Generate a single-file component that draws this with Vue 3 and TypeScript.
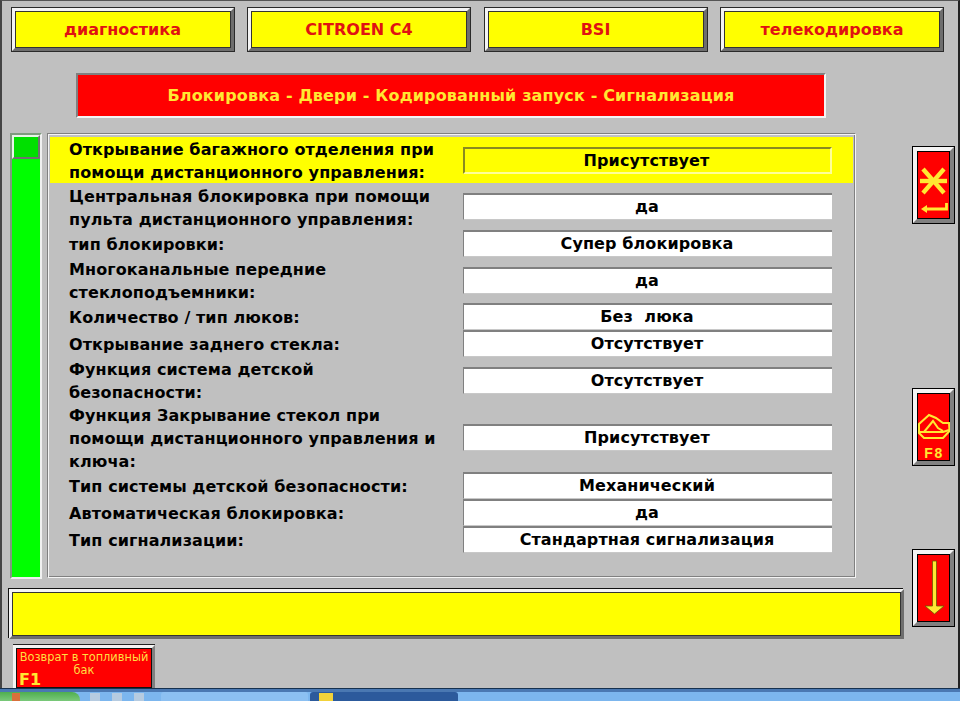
<script setup lang="ts">
import { ref } from 'vue'

const onglets = ['диагностика', 'CITROEN C4', 'BSI', 'телекодировка']

interface Ligne {
  libelle: string[]
  valeur: string
  hauteur: number
}

const lignes: Ligne[] = [
  { libelle: ['Открывание багажного отделения при', 'помощи дистанционного управления:'], valeur: 'Присутствует', hauteur: 46 },
  { libelle: ['Центральная блокировка при помощи', 'пульта дистанционного управления:'], valeur: 'да', hauteur: 47 },
  { libelle: ['тип блокировки:'], valeur: 'Супер блокировка', hauteur: 27 },
  { libelle: ['Многоканальные передние', 'стеклоподъемники:'], valeur: 'да', hauteur: 46 },
  { libelle: ['Количество / тип люков:'], valeur: 'Без  люка', hauteur: 27 },
  { libelle: ['Открывание заднего стекла:'], valeur: 'Отсутствует', hauteur: 27 },
  { libelle: ['Функция система детской', 'безопасности:'], valeur: 'Отсутствует', hauteur: 46 },
  { libelle: ['Функция Закрывание стекол при', 'помощи дистанционного управления и', 'ключа:'], valeur: 'Присутствует', hauteur: 69 },
  { libelle: ['Тип системы детской безопасности:'], valeur: 'Механический', hauteur: 27 },
  { libelle: ['Автоматическая блокировка:'], valeur: 'да', hauteur: 27 },
  { libelle: ['Тип сигнализации:'], valeur: 'Стандартная сигнализация', hauteur: 27 },
]

const active = ref(0)
</script>

<template>
  <div class="ecran">
    <div class="fenetre">
      <nav class="onglets">
        <div v-for="o in onglets" :key="o" class="onglet">{{ o }}</div>
      </nav>

      <h1 class="titre">Блокировка - Двери - Кодированный запуск - Сигнализация</h1>

      <div class="centre">
        <div class="ascenseur"><div class="curseur"></div></div>

        <div class="panneau">
          <div
            v-for="(l, i) in lignes"
            :key="i"
            class="ligne"
            :class="{ active: i === active }"
            :style="{ height: l.hauteur + 'px' }"
            @click="active = i"
          >
            <div class="libelle">
              <div v-for="t in l.libelle" :key="t">{{ t }}</div>
            </div>
            <div class="valeur">{{ l.valeur }}</div>
          </div>
        </div>

        <div class="cote">
          <button class="bouton b1">
            <svg width="32" height="66" viewBox="0 0 32 66">
              <g fill="none" stroke="#ffe832" stroke-width="4.4">
                <path d="M5 17 L26 41" />
                <path d="M26 17 L5 41" />
                <path d="M2 29 H29" />
              </g>
              <path d="M28.5 51 V57 H7" fill="none" stroke="#ffe832" stroke-width="2.8" />
              <path d="M3 57 L9 53 V61 Z" fill="#ffe832" />
            </svg>
          </button>
          <button class="bouton b2">
            <svg width="32" height="66" viewBox="0 0 32 66">
              <g fill="none" stroke="#ffe832" stroke-width="2">
                <path d="M1 30 L11 21 L18 24 L25 29 L31 29 L31.5 37 L25 44 L6 44 L1 39 Z" />
                <path d="M1 38 H25 L31 36" />
                <path d="M6 38 L15 27 L20 34 L25 37" />
              </g>
              <text x="16" y="64" class="f8">F8</text>
            </svg>
          </button>
          <button class="bouton b3">
            <svg width="32" height="66" viewBox="0 0 32 66">
              <path d="M14.5 6 H18.5 V51 H26 L16.5 59 L7 51 H14.5 Z" fill="#ffe832" stroke="#6a5a00" stroke-width="0.8" />
            </svg>
          </button>
        </div>
      </div>

      <div class="message"></div>

      <button class="retour">
        <span class="retour-texte">Возврат в топливный<br />бак</span>
        <span class="retour-touche">F1</span>
      </button>
    </div>

    <footer class="barre">
      <div class="demarrer"><span class="drapeau"></span></div>
      <div class="rapide">
        <i></i><i></i><i></i>
      </div>
      <div class="tache"></div>
      <div class="tache courante"><span class="icone"></span></div>
    </footer>
  </div>
</template>

<style scoped>
* {
  box-sizing: border-box;
}
.ecran {
  width: 960px;
  height: 701px;
  overflow: hidden;
  display: flex;
  flex-direction: column;
  background: #c0c0c0;
  font-family: "DejaVu Sans", "Liberation Sans", sans-serif;
}
.fenetre {
  height: 688px;
  flex: none;
  overflow: hidden;
  border-top: 1px solid #555;
  border-left: 2px solid #444;
  border-right: 2px solid #222;
  background: #c0c0c0;
  padding: 7px 0 0 8px;
}
.onglets {
  display: grid;
  grid-template-columns: repeat(4, 222px);
  column-gap: 14.5px;
  margin-left: 1.5px;
}
.onglet {
  height: 43px;
  background: #ffff00;
  color: #e01212;
  font-weight: bold;
  font-size: 16px;
  display: flex;
  align-items: center;
  justify-content: center;
  border: 3px solid;
  border-color: #f4f4f4 #6e6e6e #6e6e6e #f4f4f4;
  box-shadow: 0 0 0 1px #2a2a2a, inset 0 0 0 1px #333;
}
.titre {
  margin: 22px 0 0 66px;
  width: 750px;
  height: 45px;
  background: #ff0000;
  color: #ffe832;
  font-size: 16px;
  letter-spacing: 0.15px;
  font-weight: bold;
  display: flex;
  align-items: center;
  justify-content: center;
  border: 2px solid;
  border-color: #808080 #f4f4f4 #f4f4f4 #808080;
}
.centre {
  display: flex;
  align-items: flex-start;
  margin-top: 15px;
}
.ascenseur {
  width: 32px;
  height: 446px;
  background: #00ff00;
  border: 2px solid;
  border-color: #7f9a7f #f0f0f0 #f0f0f0 #7f9a7f;
  flex: none;
}
.curseur {
  height: 24px;
  background: #00e000;
  border: 2px solid;
  border-color: #e8f4e8 #707070 #707070 #e8f4e8;
}
.panneau {
  width: 809px;
  height: 445px;
  margin-left: 5px;
  flex: none;
  padding: 3px 2px 0;
  border: 1px solid;
  border-color: #808080 #f4f4f4 #f4f4f4 #808080;
  box-shadow: inset 1px 1px 0 #f4f4f4, inset -1px -1px 0 #808080;
}
.ligne {
  display: flex;
  align-items: center;
  padding-left: 19px;
  color: #000;
  font-size: 16px;
  letter-spacing: 0.1px;
  font-weight: bold;
  line-height: 23px;
}
.ligne.active {
  background: #ffff00;
}
.libelle {
  width: 394px;
  flex: none;
  white-space: nowrap;
  padding-top: 2px;
}
.valeur {
  width: 369px;
  height: 27px;
  background: #fff;
  text-align: center;
  line-height: 24px;
  white-space: pre;
  padding-right: 2px;
  border-top: 2px solid #808080;
  border-left: 1px solid #808080;
  border-bottom: 1px solid #c8c8c8;
}
.active .valeur {
  background: #ffff00;
  border: 2px solid;
  border-color: #8a8a20 #ffff99 #ffff99 #8a8a20;
  line-height: 24px;
}
.cote {
  display: flex;
  flex-direction: column;
  margin-left: 57px;
  padding-top: 14px;
}
.bouton {
  width: 41px;
  height: 76px;
  padding: 0;
  background: #ff0000;
  display: flex;
  align-items: center;
  justify-content: center;
  border: 4px solid;
  border-color: #f4f4f4 #808080 #808080 #f4f4f4;
  box-shadow: 0 0 0 1px #000, inset 0 0 0 1px #000;
}
.b2 {
  margin-top: 166px;
}
.b3 {
  margin-top: 85px;
}
.f8 {
  fill: #ffe832;
  font-size: 14px;
  letter-spacing: 1.5px;
  font-weight: bold;
  text-anchor: middle;
}
.message {
  width: 895px;
  height: 50px;
  margin-top: -37px;
  margin-left: -1px;
  background: #ffff00;
  border: 3px solid;
  border-color: #f4f4f4 #6e6e6e #6e6e6e #f4f4f4;
  box-shadow: inset 0 0 0 1px #333, -1px -1px 0 #111;
}
.retour {
  display: block;
  position: relative;
  width: 142px;
  height: 46px;
  margin: 6px 0 0 3px;
  padding: 0;
  background: #ff0000;
  color: #ffdf40;
  font-family: "DejaVu Sans", sans-serif;
  border: 3px solid;
  border-color: #f4f4f4 #808080 #808080 #f4f4f4;
  box-shadow: inset 0 0 0 1px #111, 0 -1px 0 #222;
}
.retour-texte {
  display: block;
  height: 100%;
  padding-top: 3px;
  font-size: 11.4px;
  line-height: 13px;
  text-align: center;
}
.retour-touche {
  position: absolute;
  left: 3px;
  bottom: -1px;
  font-size: 16px;
  line-height: 18px;
  font-weight: bold;
  color: #ffe832;
}
.barre {
  flex: 1;
  display: flex;
  align-items: stretch;
  background: linear-gradient(#16314f 0 1px, #4a78b2 1px 4px, #7cb6ee 4px);
  padding-top: 4px;
}
.demarrer {
  width: 80px;
  background: linear-gradient(#4fae4f, #7ac97a);
  border-radius: 0 8px 0 0;
  padding: 1px 0 0 12px;
  flex: none;
}
.drapeau {
  display: block;
  width: 8px;
  height: 8px;
  background: #d8703a;
}
.rapide {
  width: 80px;
  display: flex;
  gap: 12px;
  padding: 1px 0 0 10px;
  flex: none;
}
.rapide i {
  width: 10px;
  height: 8px;
  background: #b6cbe0;
}
.tache {
  width: 147px;
  margin-left: 1px;
  background: #8cc0f2;
  border-radius: 3px 3px 0 0;
}
.tache.courante {
  margin-left: 2px;
  width: 148px;
  background: #2c5a9c;
  padding: 1px 0 0 9px;
}
.icone {
  display: block;
  width: 14px;
  height: 8px;
  background: #f2d23a;
}
</style>
